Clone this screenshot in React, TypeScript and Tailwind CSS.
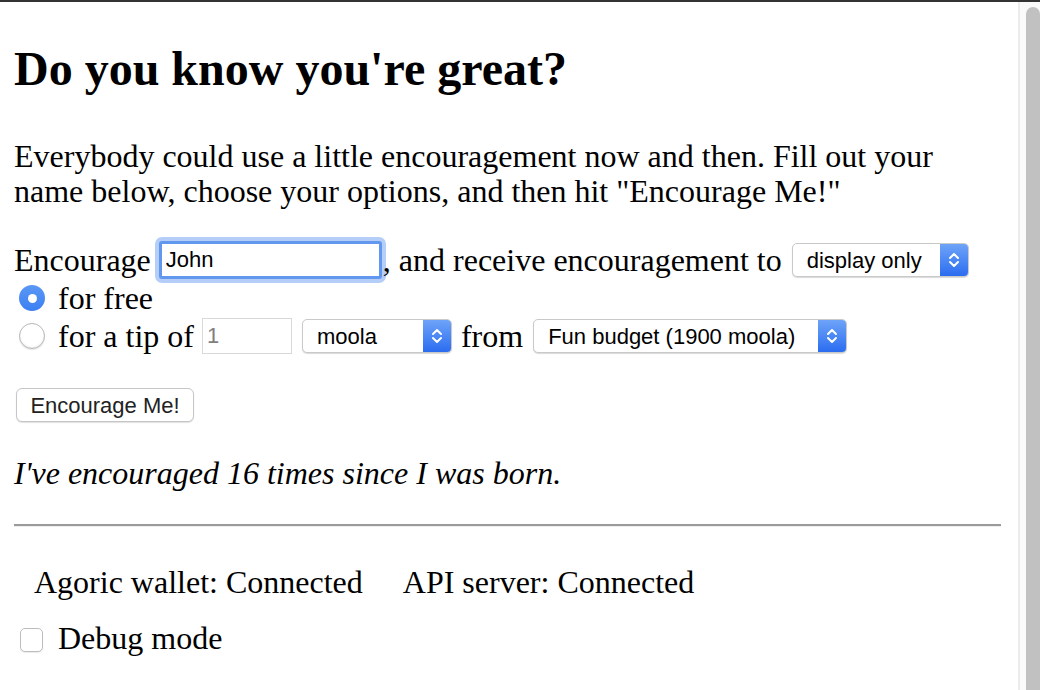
import type { ReactNode } from 'react'

const serif = "font-['Liberation_Serif','Times_New_Roman',serif]"
const sans = "font-['Liberation_Sans',Arial,sans-serif]"

function Chevrons() {
  return (
    <svg width="12" height="20" viewBox="0 0 12 20" fill="none">
      <path d="M2 8L6 4L10 8" stroke="white" strokeWidth="2" strokeLinecap="round" strokeLinejoin="round" />
      <path d="M2 12L6 16L10 12" stroke="white" strokeWidth="2" strokeLinecap="round" strokeLinejoin="round" />
    </svg>
  )
}

function MacSelect({ value, className }: { value: string; className: string }) {
  return (
    <div
      className={`flex h-[34px] items-stretch overflow-hidden rounded-[5px] border border-[#c9c9c9] bg-white shadow-[0_1px_1px_rgba(0,0,0,0.15)] ${className}`}
    >
      <span className={`flex flex-1 items-center pl-[14px] text-[22px] text-black ${sans}`}>{value}</span>
      <span className="flex w-[28px] items-center justify-center bg-gradient-to-b from-[#6ea3f8] to-[#2b6cf0]">
        <Chevrons />
      </span>
    </div>
  )
}

function Radio({ checked }: { checked?: boolean }) {
  if (checked) {
    return (
      <span className="ml-[5px] mr-[13px] flex h-[26px] w-[26px] shrink-0 items-center justify-center rounded-full bg-gradient-to-b from-[#5a98f6] to-[#3b7ff2]">
        <span className="h-[9px] w-[9px] rounded-full bg-white" />
      </span>
    )
  }
  return (
    <span className="ml-[5px] mr-[13px] block h-[26px] w-[26px] shrink-0 rounded-full border border-[#b9b9b9] bg-white shadow-[inset_0_-1px_2px_rgba(0,0,0,0.08),0_1px_1px_rgba(0,0,0,0.1)]" />
  )
}

function Row({ children, className = '' }: { children: ReactNode; className?: string }) {
  return <div className={`flex h-[38px] items-center ${className}`}>{children}</div>
}

export default function App() {
  return (
    <div className={`flex min-h-[690px] w-[1040px] flex-col bg-white text-black ${serif}`}>
      <div className="h-[2px] bg-[#333333]" />
      <div className="flex flex-1">
        <div className="flex-1 pl-[14px] pr-[17px]">
          <h1 className="mt-[39px] text-[48px] font-bold leading-[55px]">Do you know you're great?</h1>

          <p className="mt-[43px] text-[32px] leading-[35px]">
            Everybody could use a little encouragement now and then. Fill out your name below, choose your options,
            and then hit "Encourage Me!"
          </p>

          <div className="mt-[32px] text-[32px]">
            <Row>
              <span>Encourage</span>
              <input
                readOnly
                value="John"
                className={`ml-[8px] h-[38px] w-[223px] rounded-[3px] border-[3px] border-[#6197ef] bg-white pl-[4px] text-[22px] text-black shadow-[0_0_0_4px_rgba(120,165,240,0.55)] outline-none ${sans}`}
              />
              <span className="ml-[1px]">, and receive encouragement to</span>
              <MacSelect value="display only" className="ml-[10px] w-[177px]" />
            </Row>
            <Row>
              <Radio checked />
              <span>for free</span>
            </Row>
            <Row>
              <Radio />
              <span>for a tip of</span>
              <input
                readOnly
                value="1"
                className={`ml-[8px] h-[36px] w-[90px] border border-[#d9d9d9] bg-white pl-[4px] text-[22px] text-[#808080] outline-none ${sans}`}
              />
              <MacSelect value="moola" className="ml-[10px] w-[150px]" />
              <span className="ml-[9px]">from</span>
              <MacSelect value="Fun budget (1900 moola)" className="ml-[10px] w-[314px]" />
            </Row>
          </div>

          <button
            className={`mt-[33px] ml-[2px] h-[34px] w-[178px] rounded-[6px] border border-[#c6c6c6] bg-white text-[22px] text-[#222] shadow-[0_1px_1px_rgba(0,0,0,0.12)] ${sans}`}
          >
            Encourage Me!
          </button>

          <p className="mt-[34px] text-[32px] italic leading-[35px]">I've encouraged 16 times since I was born.</p>

          <hr className="mt-[33px] border-t-2 border-b border-t-[#9b9b9b] border-b-[#eeeeee]" />

          <div className="mt-[38px] flex pl-[20px] text-[32px] leading-[35px]">
            <span>Agoric wallet: Connected</span>
            <span className="ml-[40px]">API server: Connected</span>
          </div>

          <Row className="mt-[19px] text-[32px]">
            <span className="ml-[6px] mr-[15px] mt-[4px] h-[24px] w-[23px] rounded-[5px] border border-[#bdbdbd] bg-white shadow-[0_1px_1px_rgba(0,0,0,0.08)]" />
            <span>Debug mode</span>
          </Row>
        </div>

        {/* scrollbar */}
        <div className="flex w-[22px] border-l-2 border-[#ececec] bg-[#fafafa] pl-[6px] pt-[5px]">
          <div className="flex-1 rounded-t-[8px] bg-[#c1c1c1]" />
        </div>
      </div>
    </div>
  )
}
